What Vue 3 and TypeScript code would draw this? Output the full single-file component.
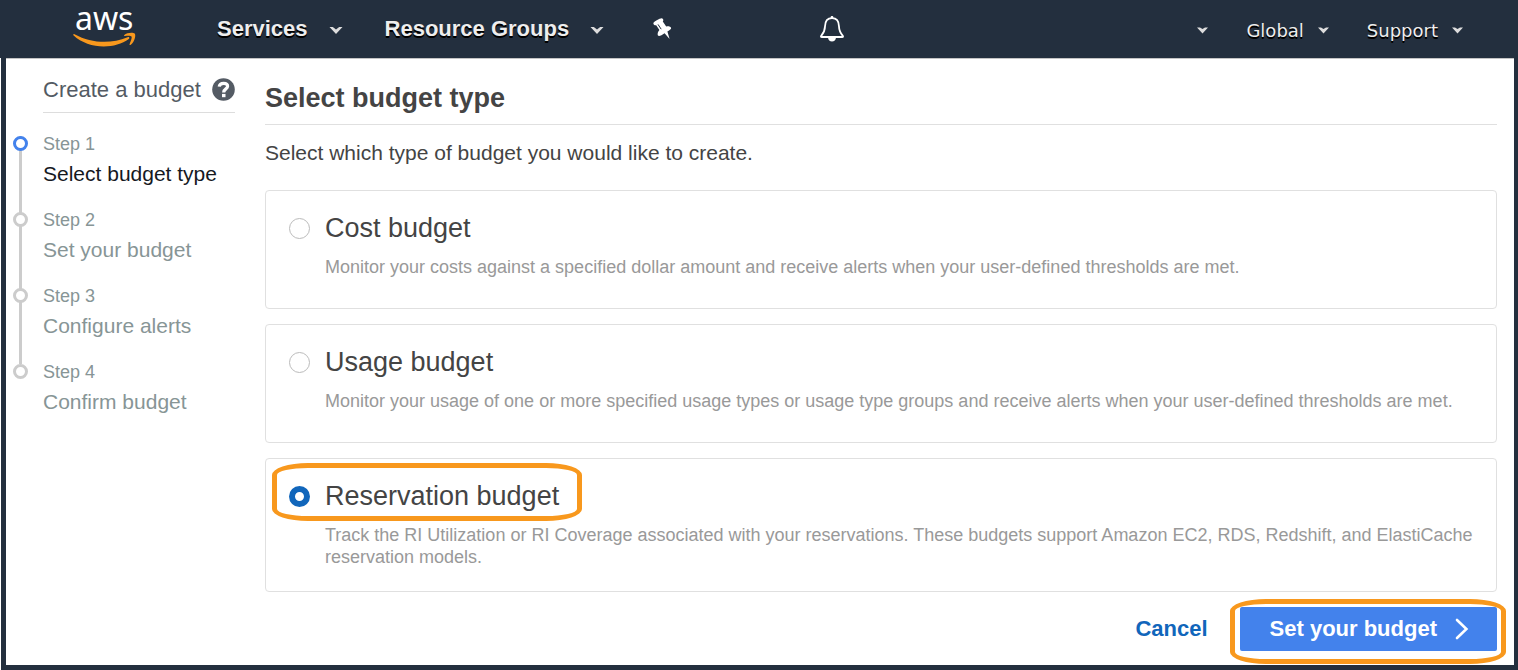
<script setup lang="ts">
import { ref } from 'vue'

interface Step {
  label: string
  name: string
}

interface BudgetType {
  id: string
  title: string
  description: string
}

const currentStep = ref(0)
const selected = ref('reservation')

const steps: Step[] = [
  { label: 'Step 1', name: 'Select budget type' },
  { label: 'Step 2', name: 'Set your budget' },
  { label: 'Step 3', name: 'Configure alerts' },
  { label: 'Step 4', name: 'Confirm budget' },
]

const budgetTypes: BudgetType[] = [
  {
    id: 'cost',
    title: 'Cost budget',
    description:
      'Monitor your costs against a specified dollar amount and receive alerts when your user-defined thresholds are met.',
  },
  {
    id: 'usage',
    title: 'Usage budget',
    description:
      'Monitor your usage of one or more specified usage types or usage type groups and receive alerts when your user-defined thresholds are met.',
  },
  {
    id: 'reservation',
    title: 'Reservation budget',
    description:
      'Track the RI Utilization or RI Coverage associated with your reservations. These budgets support Amazon EC2, RDS, Redshift, and ElastiCache reservation models.',
  },
]
</script>

<template>
  <div class="page">
    <header class="topbar">
      <a class="logo" href="#">
        <span class="logo-text">aws</span>
        <svg width="64" height="16" viewBox="0 0 64 16" aria-hidden="true">
          <path class="smile" d="M0.4 3.2C-0.1 2.5 0.6 1.8 1.5 2.2C19 11.6 38 12 54.6 5.2C56 4.7 57 6 55.8 6.9C41 17.8 15 17 0.4 3.2Z" />
          <path class="smile" d="M51.3 2.9C53.8 0.5 60.2 0.1 61.7 1.5C63.1 3 61.8 9.6 57.8 12.8C57.1 13.4 56.3 13.1 56.6 12.2C57.7 9.6 59.2 5.8 58.5 4.6C57.8 3.5 54.2 3.7 52 4.1C51.2 4.2 50.7 3.5 51.3 2.9Z" />
        </svg>
      </a>
      <nav class="main-nav">
        <button type="button" class="nav-item">
          Services
          <svg class="caret" width="14" height="9" viewBox="0 0 14 9"><path d="M0.5 1H3.8L7 3.6L10.2 1H13.5L7 8Z" /></svg>
        </button>
        <button type="button" class="nav-item">
          Resource Groups
          <svg class="caret" width="14" height="9" viewBox="0 0 14 9"><path d="M0.5 1H3.8L7 3.6L10.2 1H13.5L7 8Z" /></svg>
        </button>
        <button type="button" class="icon-button pin" aria-label="Pin shortcuts">
          <svg width="20" height="22" viewBox="0 0 20 22">
            <path fill="#fff" d="M0.4 5.2C0.6 3.6 7.6 -0.2 9.2 0.4C10.6 1 10.6 2.6 9.8 3.5L13.2 8.6C15.4 8 17.4 8.6 18 9.8C18.4 10.8 17.4 11.6 14.4 13.6L16.6 21L11.6 15.3C8.8 17.2 6 18.8 5 17.6C4.2 16.4 4.8 13.6 6.4 12L3.2 7.2C1.8 7.4 0.2 6.8 0.4 5.2Z" />
            <path stroke="#232f3e" stroke-width="1" fill="none" d="M5 6.4L8.2 11.2" />
          </svg>
        </button>
      </nav>
      <button type="button" class="icon-button bell" aria-label="Notifications">
        <svg width="26" height="28" viewBox="0 0 26 28">
          <path fill="none" stroke="#fff" stroke-width="1.8" stroke-linejoin="round" d="M13 3.2C8.2 3.2 6.1 6.8 6 11.5C5.9 16.4 4.2 18.5 2.2 20.8C1.6 21.6 2 22 2.8 22H23.2C24 22 24.4 21.6 23.8 20.8C21.8 18.5 20.1 16.4 20 11.5C19.9 6.8 17.8 3.2 13 3.2Z" />
          <path fill="#fff" d="M11.6 3.2V2.4C11.6 0.6 14.4 0.6 14.4 2.4V3.2ZM9 22.5H17C16.8 25.2 15.2 26.4 13 26.4C10.8 26.4 9.2 25.2 9 22.5Z" />
        </svg>
      </button>
      <nav class="account-nav">
        <button type="button" class="nav-small" aria-label="Account">
          <svg class="caret" width="11" height="7" viewBox="0 0 11 7"><path d="M0 0.5H3L5.5 1.9L8 0.5H11L5.5 6.5Z" /></svg>
        </button>
        <button type="button" class="nav-small">
          Global
          <svg class="caret" width="11" height="7" viewBox="0 0 11 7"><path d="M0 0.5H3L5.5 1.9L8 0.5H11L5.5 6.5Z" /></svg>
        </button>
        <button type="button" class="nav-small">
          Support
          <svg class="caret" width="11" height="7" viewBox="0 0 11 7"><path d="M0 0.5H3L5.5 1.9L8 0.5H11L5.5 6.5Z" /></svg>
        </button>
      </nav>
    </header>

    <div class="frame">
      <aside class="sidebar">
        <div class="side-title">
          <h2>Create a budget</h2>
          <button type="button" class="help" aria-label="Help">
            <svg width="23" height="23" viewBox="0 0 23 23">
              <circle cx="11.5" cy="11.5" r="11.3" fill="#545b64" />
              <path fill="none" stroke="#fff" stroke-width="3.2" d="M7.2 8.6C7.5 6.3 9.2 5.3 11.6 5.3C14.2 5.3 15.6 6.5 15.6 8.3C15.6 11 11.7 10.8 11.7 14.4" />
              <rect x="10" y="15.9" width="3.5" height="3.3" fill="#fff" />
            </svg>
          </button>
        </div>
        <ol class="steps">
          <li v-for="(step, i) in steps" :key="step.label" class="step" :class="{ current: i === currentStep }">
            <span class="track"><span class="dot"></span></span>
            <div class="step-text">
              <span class="step-label">{{ step.label }}</span>
              <span class="step-name">{{ step.name }}</span>
            </div>
          </li>
        </ol>
      </aside>

      <main class="content">
        <h1>Select budget type</h1>
        <p class="intro">Select which type of budget you would like to create.</p>
        <div class="cards" role="radiogroup" aria-label="Budget type">
          <section v-for="type in budgetTypes" :key="type.id" class="card">
            <label class="card-title" :for="type.id">
              <input :id="type.id" v-model="selected" type="radio" name="budget-type" :value="type.id" />
              {{ type.title }}
              <span v-if="selected === type.id" class="highlight highlight-title"></span>
            </label>
            <p class="card-text">{{ type.description }}</p>
          </section>
        </div>
        <div class="actions">
          <button type="button" class="cancel">Cancel</button>
          <button type="button" class="primary">
            Set your budget
            <svg width="14" height="22" viewBox="0 0 14 22"><path fill="none" stroke="#fff" stroke-width="2.6" stroke-linecap="round" stroke-linejoin="miter" d="M2 2L11.4 11L2 20" /></svg>
            <span class="highlight highlight-action"></span>
          </button>
        </div>
      </main>
    </div>
  </div>
</template>

<style>
body {
  margin: 0;
  background: #fff;
}
</style>

<style scoped>
.page {
  display: flex;
  flex-direction: column;
  min-height: 100vh;
  font-family: "Liberation Sans", Arial, sans-serif;
  color: #444;
}

button {
  border: 0;
  padding: 0;
  background: none;
  font: inherit;
  color: inherit;
  cursor: pointer;
}

svg {
  display: block;
}

h1,
h2,
p {
  margin: 0;
}

.topbar {
  display: flex;
  align-items: center;
  box-sizing: border-box;
  height: 58px;
  padding: 0 55px 0 73px;
  background: #232f3e;
  color: #eee;
}

.logo {
  display: flex;
  flex-direction: column;
  align-self: flex-start;
  width: 64px;
  color: #fff;
  text-decoration: none;
}

.logo svg {
  margin-top: -4px;
}

.logo-text {
  padding-left: 2px;
  font-family: "Noto Sans", "Open Sans", sans-serif;
  font-size: 32px;
  line-height: 36px;
}

.smile {
  fill: #f8981d;
}

.main-nav {
  display: flex;
  align-items: center;
  margin-left: 80px;
}

.nav-item {
  display: flex;
  align-items: center;
  gap: 21px;
  margin-right: 42px;
  font-size: 22px;
  font-weight: bold;
  line-height: 28px;
  text-shadow: 0 1px 0 #000, 0 2px 0 #000;
}

.caret {
  margin-top: 2px;
  fill: #ddd;
}

.pin {
  margin-left: 7px;
}

.bell {
  margin-left: 146px;
}

.account-nav {
  display: flex;
  align-items: center;
  gap: 38px;
  margin-left: auto;
}

.nav-small {
  display: flex;
  align-items: center;
  gap: 14px;
  padding-top: 4px;
  font-family: "DejaVu Sans", Verdana, sans-serif;
  font-size: 18px;
  line-height: 24px;
  text-shadow: 0 1px 0 #000, 0 2px 0 #000;
}

.nav-small .caret {
  margin: 0 0 2px;
}

.frame {
  display: flex;
  flex: 1;
  margin-left: 1px;
  border: solid #232f3e;
  border-width: 0 4px 5px 5px;
  box-shadow: inset 0 1px 0 #c4c4c4;
}

.sidebar {
  flex: none;
  width: 222px;
  padding: 18px 0 0 7px;
}

.side-title {
  display: flex;
  align-items: center;
  justify-content: space-between;
  margin: 0 0 20px 30px;
  padding-bottom: 8px;
  width: 192px;
  border-bottom: 1px solid #ddd;
}

.side-title h2 {
  font-size: 22px;
  font-weight: normal;
  line-height: 28px;
  color: #545b64;
  white-space: nowrap;
}

.help {
  margin-bottom: 2px;
}

.steps {
  margin: 0;
  padding: 0;
  list-style: none;
}

.step {
  display: flex;
  gap: 15px;
  height: 76px;
  color: #879596;
}

.track {
  width: 15px;
  margin: 3px 0 -3px;
  background: linear-gradient(#ccc, #ccc) center / 3px 100% no-repeat;
}

.step:last-child .track {
  background: none;
}

.dot {
  display: block;
  box-sizing: border-box;
  width: 15px;
  height: 15px;
  border: 3px solid #ccc;
  border-radius: 50%;
  background: #fff;
}

.current .dot {
  border-color: #4382ec;
}

.step-text {
  display: flex;
  flex-direction: column;
  gap: 6px;
}

.step-label {
  font-size: 18px;
  line-height: 22px;
}

.step-name {
  font-size: 21px;
  line-height: 26px;
}

.current .step-name {
  color: #16191f;
}

.content {
  flex: 1;
  min-width: 0;
  padding: 25px 17px 14px 30px;
}

h1 {
  padding-bottom: 11px;
  border-bottom: 1px solid #e0e0e0;
  font-size: 27px;
  line-height: 30px;
}

.intro {
  margin: 15px 0 24px;
  font-size: 21px;
  line-height: 26px;
}

.cards {
  display: flex;
  flex-direction: column;
  gap: 15px;
}

.card {
  box-sizing: border-box;
  min-height: 119px;
  padding: 22px 16px 23px 23px;
  border: 1px solid #e0e0e0;
  border-radius: 4px;
}

.card-title {
  position: relative;
  display: flex;
  align-items: center;
  gap: 15px;
  width: fit-content;
  font-size: 27px;
  line-height: 30px;
}

.card-title input {
  appearance: none;
  box-sizing: border-box;
  width: 21px;
  height: 21px;
  margin: 0;
  border: 1px solid #bbb;
  border-radius: 50%;
  background: #fff;
}

.card-title input:checked {
  border: 6px solid #1166bb;
}

.card-text {
  margin: 13px 0 0 36px;
  font-size: 18px;
  line-height: 22px;
  color: #999;
}

.highlight {
  position: absolute;
  box-sizing: border-box;
  border: 5px solid #f8981d;
  border-radius: 36px / 12px;
  pointer-events: none;
}

.highlight-title {
  inset: -18px -23px -10px -17px;
}

.highlight-action {
  inset: -8px -9px -13px -10px;
}

.actions {
  display: flex;
  align-items: center;
  justify-content: flex-end;
  gap: 32px;
  margin-top: 15px;
  font-size: 22px;
  font-weight: bold;
  line-height: 26px;
}

.cancel {
  color: #1166bb;
}

.primary {
  position: relative;
  display: flex;
  align-items: center;
  gap: 18px;
  height: 44px;
  padding: 0 28px 0 30px;
  border-radius: 2px;
  background: #4382ec;
  color: #fff;
}
</style>
